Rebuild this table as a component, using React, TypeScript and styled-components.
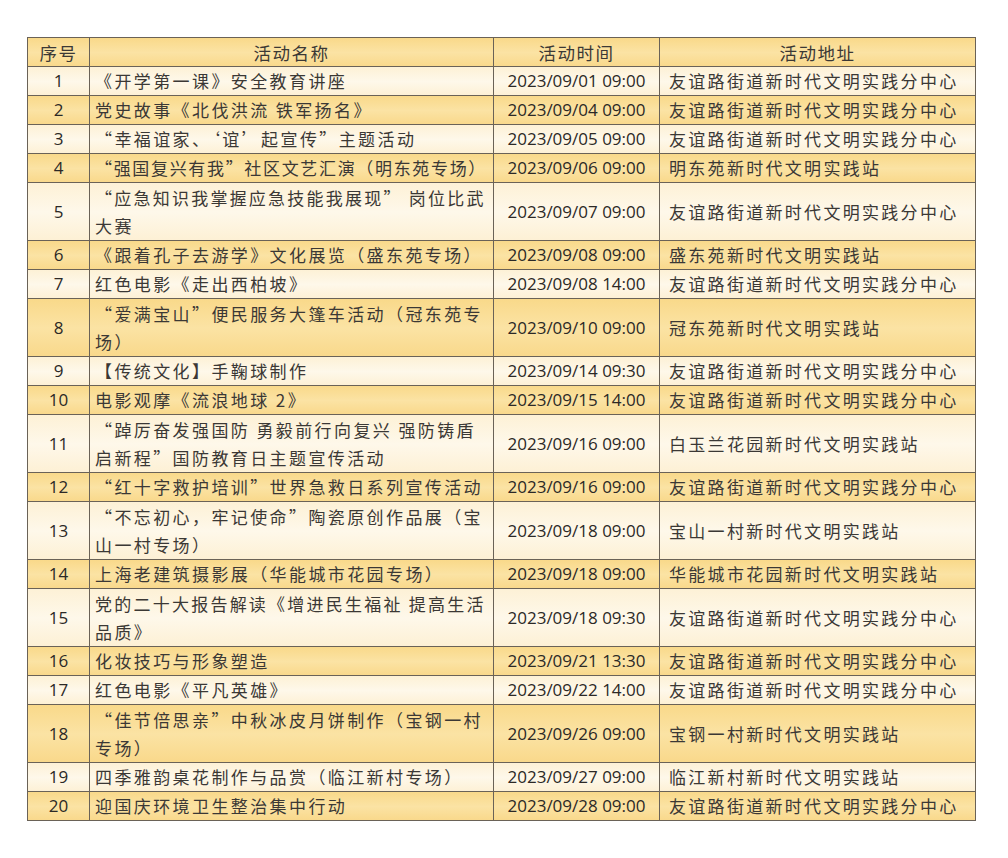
import React from 'react';
import styled, { createGlobalStyle } from 'styled-components';

const GlobalStyle = createGlobalStyle`
    html, body {
        margin: 0;
        padding: 0;
        background: #ffffff;
    }
`;

const Page = styled.div({
    width: '1008px',
    height: '858px',
    padding: '37px 0 0 27px',
    boxSizing: 'border-box',
    background: '#ffffff'
});

const Table = styled.table({
    borderCollapse: 'collapse',
    tableLayout: 'fixed',
    width: '948px',
    color: '#3b3835',
    fontFamily: '"Noto Sans CJK SC", "Noto Sans", sans-serif',
    fontSize: '17px',
    border: '1px solid #6a6257'
});

const Row = styled.tr<{ $shade: 'head' | 'odd' | 'even'; $tall?: boolean }>`
    height: ${p => (p.$tall ? '58px' : p.$shade === 'head' ? '29px' : '28px')};
    background: ${p =>
        p.$shade === 'odd'
            ? 'linear-gradient(180deg, #fdf1d6 0%, #fef8ea 50%, #fdf0d4 100%)'
            : 'linear-gradient(180deg, #f9d98a 0%, #fbe3a4 50%, #f9d88a 100%)'};
`;

const Cell = styled.td<{ $align?: 'left' | 'center'; $pad?: number; $num?: boolean }>`
    border: 1px solid #6a6257;
    padding: 0 ${p => p.$pad ?? 0}px;
    text-align: ${p => p.$align ?? 'center'};
    vertical-align: middle;
    white-space: nowrap;
    overflow: hidden;
    line-height: 26px;
    letter-spacing: ${p => (p.$num ? '0' : '2.3px')};
    font-family: ${p => (p.$num ? '"Open Sans", "Noto Sans", sans-serif' : 'inherit')};
    color: ${p => (p.$num ? '#2c2926' : 'inherit')};
    font-size: 17px;
`;

const HeadCell = styled.th`
    border: 1px solid #6a6257;
    font-weight: normal;
    font-size: 17.5px;
    text-align: center;
    line-height: 27px;
    letter-spacing: 1.5px;
    padding: 0;
`;

const Line = styled.div({
    lineHeight: '28px'
});

interface Activity {
    name: string[];
    time: string;
    place: string;
}

const CENTER = '友谊路街道新时代文明实践分中心';

const activities: Activity[] = [
    { name: ['《开学第一课》安全教育讲座'], time: '2023/09/01 09:00', place: CENTER },
    { name: ['党史故事《北伐洪流 铁军扬名》'], time: '2023/09/04 09:00', place: CENTER },
    { name: ['“幸福谊家、‘谊’起宣传”主题活动'], time: '2023/09/05 09:00', place: CENTER },
    { name: ['“强国复兴有我”社区文艺汇演（明东苑专场）'], time: '2023/09/06 09:00', place: '明东苑新时代文明实践站' },
    { name: ['“应急知识我掌握应急技能我展现” 岗位比武', '大赛'], time: '2023/09/07 09:00', place: CENTER },
    { name: ['《跟着孔子去游学》文化展览（盛东苑专场）'], time: '2023/09/08 09:00', place: '盛东苑新时代文明实践站' },
    { name: ['红色电影《走出西柏坡》'], time: '2023/09/08 14:00', place: CENTER },
    { name: ['“爱满宝山”便民服务大篷车活动（冠东苑专', '场）'], time: '2023/09/10 09:00', place: '冠东苑新时代文明实践站' },
    { name: ['【传统文化】手鞠球制作'], time: '2023/09/14 09:30', place: CENTER },
    { name: ['电影观摩《流浪地球 2》'], time: '2023/09/15 14:00', place: CENTER },
    { name: ['“踔厉奋发强国防 勇毅前行向复兴 强防铸盾', '启新程”国防教育日主题宣传活动'], time: '2023/09/16 09:00', place: '白玉兰花园新时代文明实践站' },
    { name: ['“红十字救护培训”世界急救日系列宣传活动'], time: '2023/09/16 09:00', place: CENTER },
    { name: ['“不忘初心，牢记使命”陶瓷原创作品展（宝', '山一村专场）'], time: '2023/09/18 09:00', place: '宝山一村新时代文明实践站' },
    { name: ['上海老建筑摄影展（华能城市花园专场）'], time: '2023/09/18 09:00', place: '华能城市花园新时代文明实践站' },
    { name: ['党的二十大报告解读《增进民生福祉 提高生活', '品质》'], time: '2023/09/18 09:30', place: CENTER },
    { name: ['化妆技巧与形象塑造'], time: '2023/09/21 13:30', place: CENTER },
    { name: ['红色电影《平凡英雄》'], time: '2023/09/22 14:00', place: CENTER },
    { name: ['“佳节倍思亲”中秋冰皮月饼制作（宝钢一村', '专场）'], time: '2023/09/26 09:00', place: '宝钢一村新时代文明实践站' },
    { name: ['四季雅韵桌花制作与品赏（临江新村专场）'], time: '2023/09/27 09:00', place: '临江新村新时代文明实践站' },
    { name: ['迎国庆环境卫生整治集中行动'], time: '2023/09/28 09:00', place: CENTER }
];

// the source table stretches long lines to fill the cell; squeeze spacing where a line would overflow
const FONT = 17;
const ROOM = 392;
function spacingFor(line: string): number {
    let units = 0;
    for (const ch of line) {
        if (ch === ' ') units += 0.3;
        else if (ch.charCodeAt(0) < 128) units += 0.57;
        else units += 1;
    }
    const count = Array.from(line).length;
    return Math.min(2.4, (ROOM - units * FONT) / count);
}

export default function App() {
    return (
        <Page>
            <GlobalStyle />
            <Table>
                <colgroup>
                    <col style={{ width: '62px' }} />
                    <col style={{ width: '404px' }} />
                    <col style={{ width: '166px' }} />
                    <col style={{ width: '316px' }} />
                </colgroup>
                <thead>
                    <Row $shade="head">
                        <HeadCell>序号</HeadCell>
                        <HeadCell>活动名称</HeadCell>
                        <HeadCell>活动时间</HeadCell>
                        <HeadCell>活动地址</HeadCell>
                    </Row>
                </thead>
                <tbody>
                    {activities.map((a, i) => (
                        <Row key={i} $shade={i % 2 === 0 ? 'odd' : 'even'} $tall={a.name.length > 1}>
                            <Cell $num>{i + 1}</Cell>
                            <Cell $align="left" $pad={5}>
                                {a.name.map((line, j) => (
                                    <Line key={j} style={{ letterSpacing: `${spacingFor(line)}px` }}>
                                        {line}
                                    </Line>
                                ))}
                            </Cell>
                            <Cell $num>{a.time}</Cell>
                            <Cell $align="left" $pad={9}>{a.place}</Cell>
                        </Row>
                    ))}
                </tbody>
            </Table>
        </Page>
    );
}
